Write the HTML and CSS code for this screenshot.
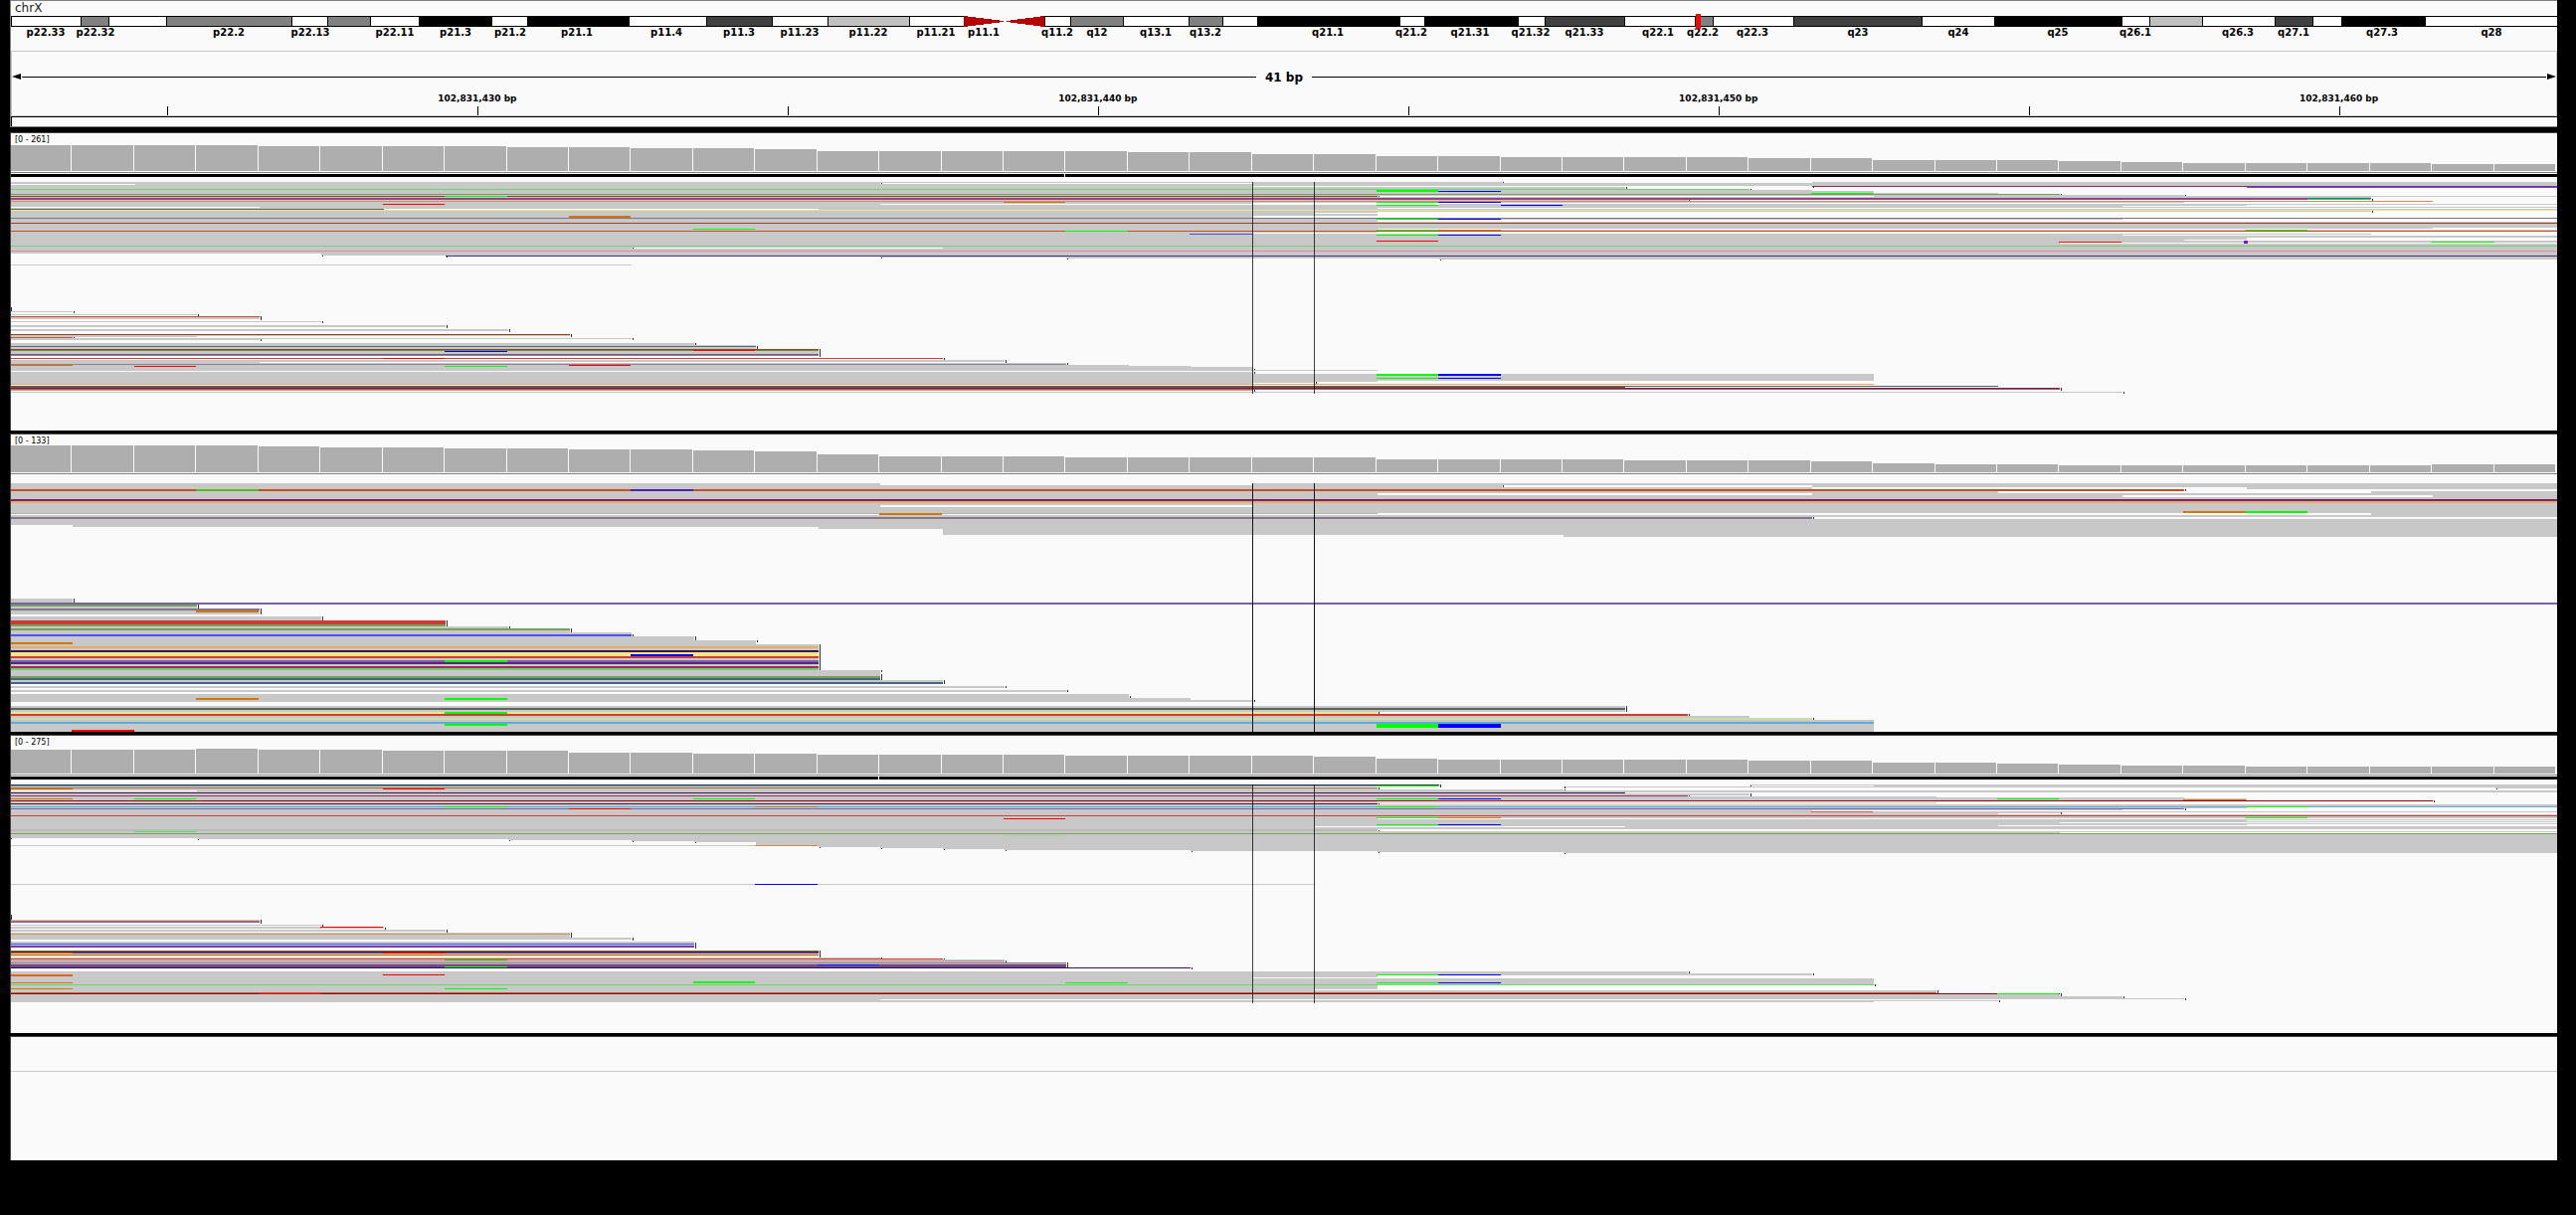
FILE: index.html
```html
<!DOCTYPE html>
<html lang="en">
<head>
<meta charset="utf-8">
<title>chrX genome view</title>
<link rel="stylesheet" href="styles.css">
</head>
<body>
<main class="browser">
  <header class="locus">
    <h1 class="chromosome">chrX</h1>
    <svg class="track ideogram" id="ideogram" role="img" aria-label="Chromosome ideogram"></svg>
    <div class="ruler">
      <div class="span">
        <svg class="arrow" viewBox="0 0 10 6" aria-hidden="true"><path d="M0 3 9 0V6Z"/></svg>
        <span class="line"></span>
        <span class="span-label">41 bp</span>
        <span class="line"></span>
        <svg class="arrow" viewBox="0 0 10 6" aria-hidden="true"><path d="M10 3 1 0V6Z"/></svg>
      </div>
      <svg class="track ticks" id="ticks" role="img" aria-label="Base positions"></svg>
    </div>
    <div class="region"></div>
  </header>

  <section class="panel">
    <p class="range">[0 - 261]</p>
    <svg class="track coverage" id="coverage-1"></svg>
    <svg class="track downsampled" id="down-1"></svg>
    <svg class="track reads" id="reads-1"></svg>
  </section>
  <section class="panel">
    <p class="range">[0 - 133]</p>
    <svg class="track coverage" id="coverage-2"></svg>
    <svg class="track downsampled" id="down-2"></svg>
    <svg class="track reads" id="reads-2"></svg>
  </section>
  <section class="panel">
    <p class="range">[0 - 275]</p>
    <svg class="track coverage" id="coverage-3"></svg>
    <svg class="track downsampled" id="down-3"></svg>
    <svg class="track reads" id="reads-3"></svg>
  </section>
  <section class="panel features">
    <div class="sequence"></div>
  </section>
</main>
<script src="tracks.js"></script>
</body>
</html>
```
FILE: styles.css
```css
* { box-sizing: border-box; }
body {
  margin: 0;
  background: #000;
  color: #000;
  font-family: "DejaVu Sans", sans-serif;
}
.browser { padding: 0 19px 0 10px; }
.track { display: block; width: 100%; shape-rendering: crispEdges; }

.locus {
  background: #fafafa;
  border-top: 1px solid #808080;
  border-bottom: 1px solid #808080;
  border-left: 1px solid #808080;
  margin-bottom: 5px;
}
.chromosome {
  margin: 0;
  padding: 1px 0 0 4px;
  font-size: 12px;
  font-weight: 400;
  line-height: 12px;
  color: #222;
}
.ideogram { height: 37px; }
.band-label { font-size: 10px; font-weight: 700; text-anchor: middle; }

.ruler {
  height: 66px;
  padding-top: 17px;
  border: 1px solid #c8c8d0;
}
.span { display: flex; align-items: center; height: 16px; }
.arrow { width: 10px; height: 6px; flex: none; }
.line { flex: 1; height: 1px; background: #000; }
.span-label { padding: 1px 9px 0; font-size: 12px; font-weight: 700; line-height: 16px; }
.ticks { height: 31px; }
.tick-label { font-size: 9px; font-weight: 700; text-anchor: middle; }
.region { height: 10px; border-top: 1px solid #000; border-left: 1px solid #000; }

.panel {
  background: #fafafa;
  border-top: 1px solid #444;
  border-left: 1px solid #444;
  margin-bottom: 3px;
}
.range {
  margin: 0;
  padding: 2px 0 0 4px;
  font-size: 8px;
  line-height: 9px;
}
.coverage { height: 29px; border-bottom: 1px solid #808080; }
.downsampled { height: 4px; margin-bottom: 5px; }
.reads { height: 250px; }
.features { height: 125px; }
.sequence { height: 35px; border-bottom: 1px solid #c8c8d0; }
```
FILE: tracks.js
```js
const NS = "http://www.w3.org/2000/svg";
const BASES = 41;
const COLORS = {
  g: "#c8c8c8", w: "#fafafa", G: "#00ff00", R: "#ff0000", B: "#0000ff", O: "#d27800"
};

function add(parent, tag, attrs, text) {
  const el = document.createElementNS(NS, tag);
  for (const key in attrs) el.setAttribute(key, attrs[key]);
  if (text) el.textContent = text;
  parent.appendChild(el);
  return el;
}
const byId = id => document.getElementById(id);
const basePct = k => (k / BASES * 100) + "%";
const mapPct = x => (x / 2560 * 100) + "%";

/* Ideogram: right edge of each band in map units, with its stain */
const bands = [
  [70, "#fff"], [98, "#808080"], [156, "#fff"], [282, "#808080"], [318, "#fff"], [361, "#808080"],
  [410, "#fff"], [483, "#000"], [519, "#fff"], [621, "#000"], [699, "#fff"], [765, "#404040"],
  [821, "#fff"], [903, "#c0c0c0"], [958, "#fff"], [1039, null], [1065, "#fff"], [1118, "#808080"],
  [1184, "#fff"], [1218, "#808080"], [1253, "#fff"], [1396, "#000"], [1421, "#fff"], [1515, "#000"],
  [1542, "#fff"], [1622, "#404040"], [1693, "#fff"], [1711, "#808080"], [1792, "#fff"],
  [1921, "#404040"], [1994, "#fff"], [2122, "#000"], [2150, "#fff"], [2203, "#c0c0c0"],
  [2276, "#fff"], [2314, "#404040"], [2343, "#fff"], [2427, "#000"], [2560, "#fff"]
];
const bandLabels = [
  ["p22.33", 35], ["p22.32", 85], ["p22.2", 219], ["p22.13", 301], ["p22.11", 386], ["p21.3", 447],
  ["p21.2", 502], ["p21.1", 569], ["p11.4", 659], ["p11.3", 732], ["p11.23", 793], ["p11.22", 862],
  ["p11.21", 930], ["p11.1", 978], ["q11.2", 1052], ["q12", 1092], ["q13.1", 1151], ["q13.2", 1201],
  ["q21.1", 1324], ["q21.2", 1408], ["q21.31", 1467], ["q21.32", 1528], ["q21.33", 1582],
  ["q22.1", 1656], ["q22.2", 1701], ["q22.3", 1751], ["q23", 1857], ["q24", 1958], ["q25", 2058],
  ["q26.1", 2136], ["q26.3", 2239], ["q27.1", 2295], ["q27.3", 2384], ["q28", 2494]
];
const ideogram = byId("ideogram");
let left = 0;
for (const [right, fill] of bands) {
  if (fill) {
    add(ideogram, "rect", { x: mapPct(left), y: 2, width: mapPct(right - left), height: 11, fill: "#000" });
    add(ideogram, "rect", { x: mapPct(left + 1), y: 3, width: mapPct(right - left - 1), height: 9, fill });
  } else {
    const arms = add(ideogram, "svg", {
      x: mapPct(left), y: 2, width: mapPct(right - left), height: 11,
      viewBox: "0 0 81 11", preserveAspectRatio: "none"
    });
    add(arms, "path", { d: "M0 0 40 5V6L0 11ZM81 0 43 5V6L81 11Z", fill: "#b40000" });
  }
  left = right;
}
for (const [name, x] of bandLabels) {
  add(ideogram, "text", { x: mapPct(x), y: 22, class: "band-label" }, name);
}
add(ideogram, "rect", { x: mapPct(1694), y: 0, width: 5, height: 15, fill: "#ff0000" });

/* Base ruler */
const ticks = byId("ticks");
for (let i = 0; i < 8; i++) {
  const x = basePct(2.5 + 5 * i);
  add(ticks, "rect", { x, y: 22, width: 1, height: 9, fill: "#000" });
  if (i % 2) add(ticks, "text", { x, y: 17, class: "tick-label" }, "102,831,4" + (25 + 5 * i) + " bp");
}

/* Coverage: one height for each base */
const coverage = [
  [26,26,26,26,25,25,25,25,24,24,23,23,22,20,20,20,20,20,19,19,17,17,15,15,14,14,14,14,13,13,11,11,11,10,9,8,8,8,8,7,7],
  [27,27,27,27,26,25,25,24,24,23,23,22,21,18,16,16,16,15,15,15,15,15,13,13,13,13,12,12,12,11,9,8,8,7,7,7,7,7,7,8,8],
  [24,24,24,25,24,24,23,23,23,21,21,20,20,19,19,19,19,18,18,18,18,17,15,14,14,14,14,14,13,13,11,11,10,9,8,8,7,7,7,7,7]
];
coverage.forEach((heights, n) => {
  const svg = byId("coverage-" + (n + 1));
  heights.forEach((h, k) => add(svg, "rect", {
    x: basePct(k), y: 27 - h, width: basePct(1), height: h, fill: "#aeaeae", transform: "translate(-1 0)"
  }));
  for (let k = 1; k <= BASES; k++) add(svg, "rect", {
    x: basePct(k), y: 0, width: 1, height: 27, fill: "#fafafa", transform: "translate(-2 0)"
  });
});

/* Downsampling bar, broken at one base */
for (const [n, gap] of [[1, 17], [3, 14]]) {
  const svg = byId("down-" + n);
  add(svg, "rect", { x: 0, y: 1, width: "100%", height: 3, fill: "#000" });
  add(svg, "rect", { x: basePct(gap), y: 1, width: 1, height: 3, fill: "#fafafa", transform: "translate(-2 0)" });
}

/* Alignments: top, height, first base, end base, colour */
const reads = [
`0 72 0 41 g;72 2 5 41 g;74 1 7 41 #502878;75 1 14 41 g;76 1 17 41 g;77 1 23 41 g;83 1 0 10 g
0 1 24 29 w;1 1 14 20 w;2 1 0 2 w;4 1 20 29 w;4 1 29 41 #a02860;5 2 26 41 w;5 1 36 41 #5050ff
7 1 0 28 #64dc64;7 1 28 41 w;8 1 29 41 w;9 2 30 41 w;8 2 22 23 G;9 1 23 24 B;11 1 32 41 w;11 1 29 30 G
12 1 0 33 #78a050;12 1 33 41 w;13 1 35 41 w;14 1 0 22 #8c4614;14 1 7 8 G;14 1 22 30 w;15 1 38 41 w
16 1 0 38 #5050e6;16 1 38 41 w;17 1 0 37 #d23c32;17 1 37 38 G;17 1 38 41 w;18 1 27 41 w
19 1 0 39 #dc8c5a;19 1 39 41 w;20 1 16 17 O;20 1 22 23 G;20 1 23 24 B;20 1 35 41 w;21 1 20 41 w
22 1 6 7 R;22 1 14 23 w;23 1 22 23 G;23 1 24 25 B;23 1 36 41 w;24 1 34 41 w;25 1 0 4 w;26 1 22 41 w
27 1 0 6 #606c50;27 1 6 13 w;28 1 0 41 #f0e682;29 1 38 41 w;30 1 22 41 w;31 1 21 41 w;32 2 22 41 w
34 2 9 10 O;34 2 20 41 w;36 1 0 41 #78788c;37 1 22 23 G;37 1 23 24 B;37 1 34 41 w;38 2 22 41 w
41 1 0 41 #9b4128;46 1 39 41 w;47 1 11 12 G;47 1 22 41 w;48 1 22 23 G;48 1 23 24 O;48 1 36 37 G
49 1 0 41 #c8501e;49 1 17 18 G;50 1 22 41 w;51 1 20 41 w;52 1 19 20 #5050dc;52 1 38 41 w
53 1 22 23 G;53 1 23 24 B;53 1 34 41 w;56 2 36 41 w;58 1 35 41 w;59 1 22 23 R;60 1 33 34 R;60 1 39 40 G
61 1 33 41 w;64 1 0 41 #6ed26e;66 1 10 15 w;69 1 0 41 #dc8caa
130 1 0 1 g;133 1 0 3 g;135 1 0 4 #c8502d;136 2 0 4 g;140 1 0 5 g;144 2 0 7 g;148 2 0 8 g
153 1 0 9 #9b4119;154 1 0 9 g;155 1 0 3 g;156 1 0 1 #b46440;157 1 0 10 g;158 1 0 4 g;162 2 0 11 g
164 1 0 12 g;165 1 0 12 #4b6e91;166 2 0 12 g;168 7 0 13 g;168 1 0 13 #964614;169 1 0 13 #6e8c46
169 1 11 12 R;170 1 7 8 B;173 1 0 13 #7850a0;174 1 0 13 #7d8c78;177 1 0 15 #d23c32;177 1 6 7 R
179 2 0 16 g;181 1 0 4 g;182 1 0 17 g;183 1 0 17 #8c8296;184 1 0 18 g;184 1 0 1 O;184 1 9 10 R
185 1 0 19 g;185 1 2 3 R;185 1 7 8 G;186 3 0 20 g;189 1 0 22 g;191 2 0 20 g;193 7 0 30 g
193 2 22 23 G;193 2 23 24 B;197 1 22 23 G;197 1 23 24 B;200 1 0 22 g;201 2 0 20 g;203 1 0 30 #e6aa5a
201 1 20 21 g;205 1 0 32 #506464;206 1 0 26 #82502d;207 1 0 33 #5a2382;208 1 0 33 #b4553c
209 1 0 20 #dc9664;211 1 0 34 g`,
`0 42 0 41 g;42 2 1 41 g;44 2 13 41 g;46 6 15 41 g;52 2 25 41 g;0 2 14 20 w;2 2 24 29 w;4 2 29 36 w
6 2 0 35 #c8501e;6 2 3 4 #50be14;6 2 10 11 #4b1eb4;6 2 35 41 w;8 2 32 38 w;10 2 22 29 w;12 2 34 39 w
16 2 0 41 #7d236e;18 2 0 41 #e6af64;22 2 14 20 w;28 2 35 36 O;28 2 36 37 G;30 1 0 22 #b4b4b4
31 1 0 22 w;30 2 14 15 O;30 2 22 38 w;34 2 0 29 #82788c;34 2 29 41 w;116 4 0 1 g;120 2 0 41 #7864a5
122 2 0 3 #78a05a;124 2 0 3 g;126 2 0 4 #82788c;128 4 0 4 g;128 2 3 4 O;134 4 0 5 g
138 4 0 7 #cd3c32;142 2 0 7 #78a05a;144 2 0 8 g;146 2 0 9 #78a05a;148 2 0 9 g;150 2 0 10 g
152 2 0 10 #5050ff;154 4 0 11 g;158 4 0 12 g;160 2 0 1 O;162 26 0 13 g;164 2 0 13 #e6af64
168 2 0 13 #3c1450;170 4 0 13 #f5e68c;172 2 10 11 B;174 2 0 13 #d23c32;178 2 0 13 #7864a5
178 2 7 8 G;180 2 0 13 #5f2378;184 2 0 13 #a5285f;186 2 0 13 #69d264;188 6 0 14 g
194 2 0 14 #78a050;196 2 0 14 #466487;198 2 0 15 g;200 2 0 15 #466487;204 2 0 16 g;208 2 0 17 g
212 4 0 18 g;216 2 0 19 g;216 2 3 4 O;216 2 7 8 G;218 2 0 20 g;224 6 0 26 g;226 2 0 26 #5a645f
230 2 0 22 #f0e68c;230 2 7 8 G;232 2 0 27 #d23c32;234 2 0 28 g;236 2 0 29 #cddcaa;238 12 0 30 g
240 2 0 30 #5aafdc;242 2 7 8 G;242 4 22 23 G;242 4 23 24 B;248 2 1 2 R`,
`0 54 0 41 g;54 1 3 41 g;55 1 8 41 g;56 1 10 41 g;57 1 11 41 g;58 3 12 41 g;61 1 0 41 g
61 1 12 13 #d28c50;62 1 13 41 g;63 1 14 41 g;64 1 15 41 g;65 1 16 41 g;66 1 19 41 g;67 1 22 41 g
68 1 25 41 g;0 1 0 23 #323c46;0 1 23 28 w;1 1 0 22 #5aa0be;1 1 22 23 G;1 1 23 30 w;2 1 20 25 w
3 1 0 22 #c8642d;3 1 22 40 w;4 1 0 1 O;4 1 6 7 R;4 1 22 41 w;5 1 25 41 w;6 1 0 3 w
8 1 0 26 #3c1e5a;8 1 26 41 w;9 2 28 41 w;11 1 0 27 #a0325f;11 1 27 41 w;12 1 31 41 w;13 1 35 41 w
14 1 0 1 O;14 1 2 3 G;14 1 11 12 G;14 1 22 23 G;14 1 23 24 B;14 1 32 33 G;14 2 36 41 w
15 1 35 36 O;16 1 0 39 #960000;16 1 39 41 w;17 1 22 41 w;18 1 31 41 w;19 1 0 22 #3c2350;19 1 22 41 w
22 1 0 41 #5aafdc;22 1 7 8 G;22 1 12 13 #a0824b;22 1 22 23 G;22 1 36 37 G;23 1 36 41 w
24 1 0 35 #7864aa;24 1 9 10 R;24 1 35 41 w;25 1 34 41 w;26 1 29 41 w;27 1 29 30 #e65046
28 1 33 41 w;29 1 32 41 w;31 1 0 41 #d23c32;33 1 22 23 G;33 1 23 24 O;33 1 36 37 G
34 1 16 17 R;34 1 22 41 w;36 1 36 41 w;38 1 33 41 w;40 1 22 23 G;40 1 23 24 B;40 1 36 41 w
41 1 32 41 w;42 1 21 26 w;45 2 0 22 #b9b9b9;45 2 22 41 w;47 1 2 3 #5ae65a;48 1 33 41 w
49 1 0 41 #78a05a;51 1 16 17 #aad2a0;100 1 0 21 g;100 1 12 13 B
136 1 0 4 g;137 1 0 4 #be6e46;138 1 0 4 #7864aa;141 1 0 5 g;143 2 0 6 g;143 1 5 6 R;146 2 0 7 g
149 5 0 9 g;150 1 0 9 #d2915f;154 2 0 10 g;158 5 0 11 g;160 1 0 11 #5050ff;162 1 0 11 #5050ff
163 1 0 11 #962d6e;167 1 0 13 #647850;168 1 0 13 #8c0000;169 1 0 13 #5a50c8;169 1 0 1 O;169 1 6 7 R
170 1 0 13 g;171 1 0 13 #be6e32;172 1 0 13 #f0e178;174 1 0 14 g;175 1 0 15 #d23c32;176 3 0 16 g
176 1 7 8 G;177 1 0 16 #d28c96;179 1 0 17 #82788c;180 1 0 17 g;181 1 0 17 #73235f;181 1 13 14 B
182 1 0 17 #78649b;183 1 0 17 #5a3c8c;183 1 7 8 G;184 1 0 19 #411450;188 2 0 27 g;190 2 0 29 g
192 2 0 22 g;191 1 0 1 O;192 1 0 1 #f05028;191 1 6 7 R;191 1 22 23 G;191 1 23 24 B;194 1 0 20 g
195 6 0 30 g;198 2 11 12 G;199 1 0 1 O;199 1 17 18 G;199 1 22 23 G;199 1 23 24 B
201 1 0 30 #64dc64;202 4 0 22 g;205 1 0 1 O;205 1 7 8 G;206 1 0 21 g;207 2 0 31 g
209 1 0 31 #b46446;210 1 0 33 #960000;210 1 4 5 R;210 1 32 33 G;211 2 0 33 g;213 2 0 34 g
215 1 0 35 g;216 1 0 14 g;217 1 0 32 g;218 1 0 30 g`
];

/* Clipped read ends: top, height, base */
const ends = [
`126 4 0;130 2 1;133 2 3;135 4 4;140 2 5;144 3 7;148 3 8;153 3 9;156 1 1;157 2 10;158 2 4;162 2 11
165 3 12;168 8 13;177 2 15;179 3 16;182 2 17;188 1 20;191 2 20;201 2 21;209 2 20;207 3 33;211 2 34
1 1 14;0 1 24;4 2 29;5 2 26;7 1 28;12 1 33;13 1 35;14 1 22;18 1 27;17 2 38;29 2 38;66 1 10;74 1 5
74 2 7;76 1 14;77 1 17;78 1 23`,
`116 4 1;122 4 3;126 6 4;134 4 5;138 6 7;144 2 8;146 4 9;152 2 10;154 4 11;158 2 12;162 26 13
188 2 14;192 6 14;198 4 15;204 2 16;208 2 17;214 2 18;218 2 20;224 6 26;230 2 22;232 2 27;236 2 29
2 2 24;6 2 35;34 2 29`,
`0 3 23;2 2 25;1 1 28;3 2 22;5 1 25;4 1 40;9 3 28;11 1 27;16 2 39;19 1 22;24 2 35;28 2 33;46 1 22
54 1 0;55 1 3;56 1 8;57 1 10;58 1 11;63 1 13;64 1 14;65 1 15;66 1 16;67 1 19;68 1 22;69 1 25
131 5 0;136 4 4;141 2 5;144 2 6;146 3 7;149 5 9;154 3 10;159 6 11;167 7 13;174 1 14;175 1 15
177 2 16;179 5 17;184 2 19;188 2 27;190 2 29;201 2 30;207 3 31;210 3 33;213 2 34;215 2 35;217 2 32`
];
const guideHeights = [213, 250, 220];

const rows = text => text.split(/[;\n]/).map(line => line.trim().split(" "));
reads.forEach((text, n) => {
  const svg = byId("reads-" + (n + 1));
  for (const [y, height, from, to, color] of rows(text)) {
    const mismatch = from > 0 && to - from === 1 && color !== "g" && color !== "w";
    add(svg, "rect", {
      x: basePct(+from), y, width: basePct(to - from), height, fill: COLORS[color] || color,
      transform: mismatch ? "translate(-1 0)" : "translate(0 0)"
    });
  }
  for (const [y, height, k] of rows(ends[n])) {
    add(svg, "rect", {
      x: basePct(+k), y, width: 1, height, fill: "#323232",
      transform: +k ? "translate(1 0)" : "translate(0 0)"
    });
  }
  for (const k of [20, 21]) {
    add(svg, "rect", {
      x: basePct(k), y: 0, width: 1, height: guideHeights[n], fill: "#000",
      "fill-opacity": n === 1 ? 0.9 : 0.75, transform: "translate(-1 0)"
    });
  }
});
/* Insertion marker */
add(byId("reads-1"), "rect", { x: basePct(36), y: 59, width: 4, height: 3, fill: "#7814e6", transform: "translate(-3 0)" });
```
